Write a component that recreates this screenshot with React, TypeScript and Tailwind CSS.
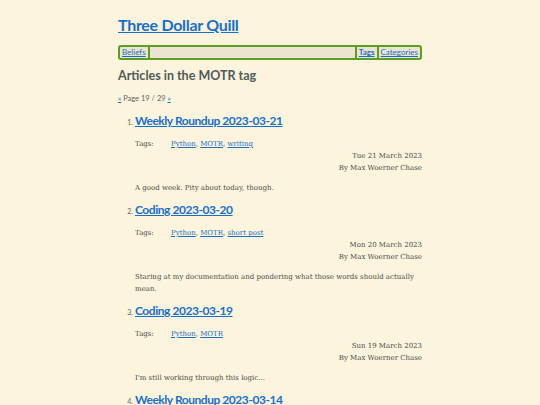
const sans = "font-['Lato','Open_Sans',sans-serif]"
const serif = "font-['DejaVu_Serif','Liberation_Serif',serif]"

type Post = {
  title: string
  tags: string[]
  date: string
  summary: string
}

const posts: Post[] = [
  {
    title: 'Weekly Roundup 2023-03-21',
    tags: ['Python', 'MOTR', 'writing'],
    date: 'Tue 21 March 2023',
    summary: 'A good week. Pity about today, though.',
  },
  {
    title: 'Coding 2023-03-20',
    tags: ['Python', 'MOTR', 'short post'],
    date: 'Mon 20 March 2023',
    summary: 'Staring at my documentation and pondering what those words should actually mean.',
  },
  {
    title: 'Coding 2023-03-19',
    tags: ['Python', 'MOTR'],
    date: 'Sun 19 March 2023',
    summary: "I'm still working through this logic...",
  },
  {
    title: 'Weekly Roundup 2023-03-14',
    tags: ['Python', 'MOTR'],
    date: 'Tue 14 March 2023',
    summary: 'A slow week.',
  },
]

const linkCls = 'text-[#1a6fc4] underline'

function PostItem({ post, index }: { post: Post; index: number }) {
  return (
    <li className="mt-[7px]">
      <div className="flex h-[18px] items-baseline leading-[18px]">
        <span className={`${sans} w-[17px] pr-[2px] text-right text-[7px] text-[#666]`}>{index + 1}.</span>
        <a href="#" className={`${sans} ${linkCls} text-[12px] font-bold tracking-[-0.45px]`}>
          {post.title}
        </a>
      </div>
      <div className="pl-[17px]">
        <div className={`${serif} mt-[8px] flex h-[12px] text-[7px] leading-[12px] text-[#4a4a4a]`}>
          <span className="w-[36px]">Tags:</span>
          <span>
            {post.tags.map((t, i) => (
              <span key={t}>
                <a href="#" className={linkCls}>
                  {t}
                </a>
                {i < post.tags.length - 1 && ', '}
              </span>
            ))}
          </span>
        </div>
        <div className={`${serif} text-right text-[7px] leading-[12px] text-[#4a4a4a]`}>
          <div className="h-[12px]">{post.date}</div>
          <div className="h-[12px]">By Max Woerner Chase</div>
        </div>
        <p className={`${serif} mt-[8px] text-[7px] leading-[12px] text-[#4a4a4a]`}>{post.summary}</p>
      </div>
    </li>
  )
}

export default function App() {
  return (
    <div className="min-h-screen bg-[#fcf4dc]">
      <div className="mx-auto w-[304px] pt-[12px]">
        <h1 className={`${sans} h-[26px] text-[16px] font-bold leading-[26px] tracking-[-0.3px]`}>
          <a href="#" className={linkCls}>
            Three Dollar Quill
          </a>
        </h1>

        <nav
          className={`${sans} mt-[7px] flex h-[15px] items-stretch rounded-[3px] border-2 border-[#5e9c22] bg-[#ebe4d0] text-[8px] leading-[11px]`}
        >
          <a href="#" className={`${linkCls} px-[2px]`}>
            Beliefs
          </a>
          <span className="w-[2px] bg-[#5e9c22]" />
          <span className="flex-1" />
          <span className="w-[2px] bg-[#5e9c22]" />
          <a href="#" className={`${linkCls} px-[2px] font-bold`}>
            Tags
          </a>
          <span className="w-[2px] bg-[#5e9c22]" />
          <a href="#" className={`${linkCls} px-[2px]`}>
            Categories
          </a>
        </nav>

        <h2 className={`${sans} mt-[8px] h-[16px] text-[12.5px] font-bold leading-[16px] text-[#4f5a5a]`}>
          Articles in the MOTR tag
        </h2>

        <div className={`${sans} mt-[9px] h-[12px] text-[7.5px] leading-[12px] text-[#666]`}>
          <a href="#" className={linkCls}>
            «
          </a>{' '}
          Page 19 / 29{' '}
          <a href="#" className={linkCls}>
            »
          </a>
        </div>

        <ol>
          {posts.map((p, i) => (
            <PostItem key={p.title} post={p} index={i} />
          ))}
        </ol>
      </div>
    </div>
  )
}
